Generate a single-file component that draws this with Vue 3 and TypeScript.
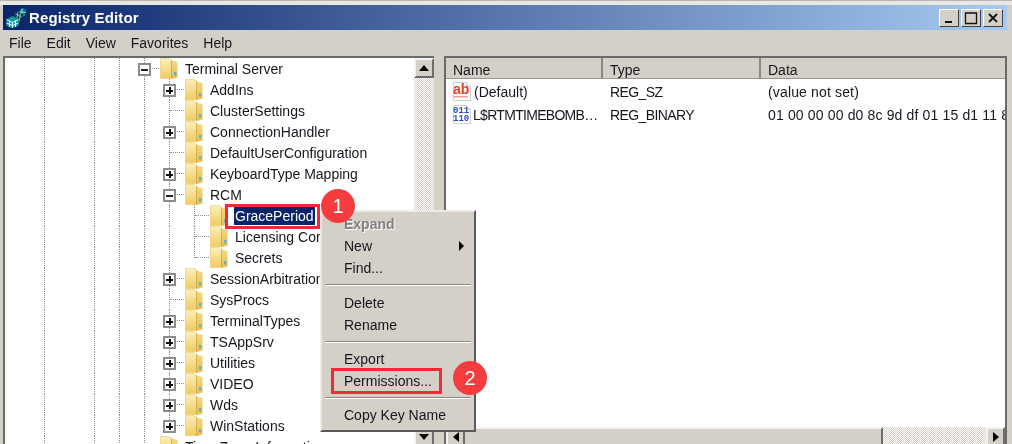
<script setup lang="ts">
type Kind = 'plus' | 'minus' | 'leaf'
interface Row {
  label: string
  level: number
  kind: Kind
  last?: boolean
  selected?: boolean
}

const base = [false, true, false, true, true]

const rows: Row[] = [
  { label: 'Terminal Server', level: 0, kind: 'minus' },
  { label: 'AddIns', level: 1, kind: 'plus' },
  { label: 'ClusterSettings', level: 1, kind: 'leaf' },
  { label: 'ConnectionHandler', level: 1, kind: 'plus' },
  { label: 'DefaultUserConfiguration', level: 1, kind: 'leaf' },
  { label: 'KeyboardType Mapping', level: 1, kind: 'plus' },
  { label: 'RCM', level: 1, kind: 'minus' },
  { label: 'GracePeriod', level: 2, kind: 'leaf', selected: true },
  { label: 'Licensing Core', level: 2, kind: 'leaf' },
  { label: 'Secrets', level: 2, kind: 'leaf', last: true },
  { label: 'SessionArbitrationHelper', level: 1, kind: 'plus' },
  { label: 'SysProcs', level: 1, kind: 'leaf' },
  { label: 'TerminalTypes', level: 1, kind: 'plus' },
  { label: 'TSAppSrv', level: 1, kind: 'plus' },
  { label: 'Utilities', level: 1, kind: 'plus' },
  { label: 'VIDEO', level: 1, kind: 'plus' },
  { label: 'Wds', level: 1, kind: 'plus' },
  { label: 'WinStations', level: 1, kind: 'plus', last: true },
  { label: 'Time Zone Information', level: 0, kind: 'leaf' },
]

function guides(level: number): boolean[] {
  return [...base, ...Array<boolean>(level).fill(true)]
}

const menus = ['File', 'Edit', 'View', 'Favorites', 'Help']

const values = [
  { name: '(Default)', type: 'REG_SZ', data: '(value not set)', icon: 'ab', caps: false },
  { name: 'L$RTMTIMEBOMB…', type: 'REG_BINARY', data: '01 00 00 00 d0 8c 9d df 01 15 d1 11 8c 7a 00 c0 4f c2 97 eb', icon: 'bin', caps: true },
]
</script>

<template>
  <div class="win">
    <svg class="defs" width="0" height="0" aria-hidden="true">
      <defs>
        <linearGradient id="fa" x1="0" y1="0" x2="0" y2="1">
          <stop offset="0" stop-color="#fbf0b8" />
          <stop offset="1" stop-color="#efcb62" />
        </linearGradient>
        <linearGradient id="fb" x1="0" y1="0" x2="0" y2="1">
          <stop offset="0" stop-color="#f3d981" />
          <stop offset="1" stop-color="#e8bd52" />
        </linearGradient>
        <symbol id="folder" viewBox="0 0 18 21">
          <path d="M0.5 0.5h8.5l3 2v18H0.5z" fill="url(#fa)" stroke="#e6c873" stroke-width=".6" />
          <path d="M11.5 2.5 17.5 4v15.5l-6 1.5z" fill="url(#fb)" />
          <path d="M11.5 2.5v18" stroke="#c9a54a" stroke-width=".8" />
          <rect x="14" y="14" width="2.4" height="3.4" fill="#62b3c4" />
        </symbol>
      </defs>
    </svg>

    <header class="title">
      <svg class="app-icon" width="20" height="20" viewBox="0 0 20 20">
        <path d="M13 3l3.500-3 3.500 2-1 6-3.500 1z" fill="#137e85" />
        <path d="M16 0.500 15.500 9M13.500 4l6 .5" stroke="#c9efe9" stroke-width=".8" fill="none" />
        <path d="M7 8l5-4.500 5 2.500-1 6.500-4 2.500z" fill="#0d3f4a" />
        <path d="M9.500 5.800l6 3M12 3.800l-1.500 9M14.500 4.800l-1.500 9" stroke="#7fd2cf" stroke-width=".9" fill="none" />
        <path d="M0.500 11.500l6-3.500 6 3.500v6.500l-6 2-6-2z" fill="#169aa0" />
        <path d="M0.500 11.500l6 3 6-3M6.500 14.500V20M3.500 13v6M9.500 13v6M0.500 15l6 2.500 6-2.500" stroke="#e2f8f4" stroke-width="1" fill="none" />
      </svg>
      <span class="title-text">Registry Editor</span>
      <div class="caption-btns">
        <button class="cap">
          <svg width="12" height="12" viewBox="0 0 12 12"><rect x="2" y="9" width="7" height="2" fill="#111" /></svg>
        </button>
        <button class="cap">
          <svg width="14" height="14" viewBox="0 0 14 14"><path d="M1.500 2h11v10.500h-11z" fill="none" stroke="#111" stroke-width="1.300" /></svg>
        </button>
        <button class="cap">
          <svg width="12" height="12" viewBox="0 0 12 12"><path d="M2 2l8 8M10 2l-8 8" stroke="#111" stroke-width="1.800" /></svg>
        </button>
      </div>
    </header>

    <nav class="menubar">
      <span v-for="m in menus" :key="m" class="menubar-item">{{ m }}</span>
    </nav>

    <main class="panes">
      <section class="tree-pane">
        <div class="tree">
          <div v-for="r in rows" :key="r.label" class="row">
            <span v-for="(g, i) in guides(r.level)" :key="i" class="cell" :class="{ guide: g }"></span>
            <span class="cell node" :class="{ 'node-last': r.last }">
              <span v-if="r.kind !== 'leaf'" class="box" :class="r.kind"></span>
            </span>
            <svg class="folder" width="18" height="21"><use href="#folder" /></svg>
            <span class="label" :class="{ selected: r.selected }">{{ r.label }}</span>
          </div>
        </div>
        <div class="vscroll">
          <span class="sbtn"><i class="tri up"></i></span>
          <span class="strack"></span>
          <span class="sbtn"><i class="tri down"></i></span>
        </div>
      </section>

      <section class="list-pane">
        <div class="list-head">
          <span class="col name">Name</span>
          <span class="col type">Type</span>
          <span class="col data">Data</span>
        </div>
        <div class="list-body">
          <div v-for="v in values" :key="v.name" class="list-row">
            <span class="vname">
              <svg class="val-icon" width="20" height="21" viewBox="0 0 20 21">
                <path d="M1.500 1.500h13l4 4v14h-17z" fill="#fff" stroke="#cfcfcf" />
                <path d="M14.500 1.500v4h4" fill="#eee" stroke="#cfcfcf" />
                <template v-if="v.icon === 'ab'">
                  <text x="1" y="13" class="ab">ab</text>
                  <rect x="2" y="15" width="14" height="1.500" fill="#e9a090" />
                </template>
                <template v-else>
                  <text x="1" y="9" class="bin">011</text>
                  <text x="1" y="17" class="bin">110</text>
                </template>
              </svg>
              <span class="vname-text" :class="{ caps: v.caps }">{{ v.name }}</span>
            </span>
            <span class="vtype">{{ v.type }}</span>
            <span class="vdata">{{ v.data }}</span>
          </div>
        </div>
        <div class="hscroll">
          <span class="sbtn wide"><i class="tri left"></i></span>
          <span class="hthumb"></span>
          <span class="htrack"></span>
          <span class="sbtn wide"><i class="tri right"></i></span>
        </div>
      </section>
    </main>

    <div class="ctx">
      <div class="ctx-item disabled">Expand</div>
      <div class="ctx-item">New<i class="tri right small"></i></div>
      <div class="ctx-item">Find...</div>
      <div class="sep first"></div>
      <div class="ctx-item">Delete</div>
      <div class="ctx-item">Rename</div>
      <div class="sep"></div>
      <div class="ctx-item">Export</div>
      <div class="ctx-item">Permissions...</div>
      <div class="sep"></div>
      <div class="ctx-item">Copy Key Name</div>
    </div>

    <span class="mark mark-a"></span>
    <span class="mark mark-b"></span>
    <span class="badge badge-a">1</span>
    <span class="badge badge-b">2</span>
  </div>
</template>

<style>
html, body { margin: 0; background: #fff; }
</style>

<style scoped>
.win {
  position: relative;
  width: 1012px;
  height: 444px;
  overflow: hidden;
  box-sizing: border-box;
  padding: 5px 5px 0 3px;
  background: #d4d0c8;
  border-top: 1px solid #b8b6b0;
  box-shadow: inset 0 4px 0 #e9e7e2;
  font-family: "Liberation Sans", Arial, sans-serif;
  font-size: 14px;
  color: #16161e;
  filter: blur(0.45px);
}
.defs { position: absolute; }

.title {
  height: 25px;
  margin-top: -1px;
  display: flex;
  align-items: center;
  padding: 0 4px 0 3px;
  background: linear-gradient(90deg, #0a246a, #a6caf0);
  color: #fff;
}
.app-icon { flex: none; }
.title-text { margin-left: 3px; font-weight: 700; font-size: 15px; letter-spacing: 0.15px; }
.caption-btns { margin-left: auto; display: flex; gap: 2px; }
.cap {
  width: 20px;
  height: 18px;
  padding: 0;
  display: flex;
  align-items: center;
  justify-content: center;
  background: #d4d0c8;
  border: 1px solid;
  border-color: #fff #404040 #404040 #fff;
}

.menubar {
  height: 26px;
  display: flex;
  align-items: center;
  margin-left: 6px;
  gap: 15px;
}

.panes { display: flex; height: 400px; gap: 10px; }
.tree-pane {
  width: 431px;
  flex: none;
  box-sizing: border-box;
  display: flex;
  background: #fff;
  border-left: 2px solid #6a6a6a;
  border-top: 2px solid #6a6a6a;
}
.tree {
  flex: 1;
  min-width: 0;
  overflow: hidden;
  padding-left: 2px;
}
.row {
  height: 21px;
  display: flex;
  align-items: center;
  white-space: nowrap;
}
.cell {
  position: relative;
  width: 25px;
  height: 21px;
  flex: none;
}
.guide::before,
.node::before {
  content: "";
  position: absolute;
  left: 12px;
  top: 0;
  bottom: 0;
  border-left: 1px dotted #8f8f8f;
}
.node-last::before { bottom: 10px; }
.node::after {
  content: "";
  position: absolute;
  left: 13px;
  right: -2px;
  top: 10px;
  border-top: 1px dotted #8f8f8f;
}
.box {
  position: absolute;
  z-index: 1;
  left: 6px;
  top: 5px;
  width: 9px;
  height: 9px;
  border: 2px solid #8c8c8c;
  background: #fff;
}
.box.minus { background: linear-gradient(#222, #222) center / 7px 2px no-repeat, #fff; }
.box.plus {
  background:
    linear-gradient(#111, #111) center / 7px 2px no-repeat,
    linear-gradient(#111, #111) center / 2px 7px no-repeat,
    #fff;
}
.folder { flex: none; margin-left: 3px; }
.label { margin-left: 6px; padding: 1px; }
.label.selected {
  background: #0a246a;
  color: #fff;
}

.vscroll {
  width: 20px;
  flex: none;
  display: flex;
  flex-direction: column;
}
.sbtn {
  flex: none;
  display: flex;
  align-items: center;
  justify-content: center;
  height: 20px;
  box-sizing: border-box;
  background: #d4d0c8;
  border: 2px solid;
  border-color: #f4f3ef #6c6c6c #6c6c6c #f4f3ef;
}
.strack,
.htrack {
  background: repeating-conic-gradient(#d4d0c8 0 25%, #fff 0 50%) 0 0 / 2px 2px;
}
.strack { height: 349px; flex: none; }
.tri { display: block; width: 0; height: 0; border: 5px solid transparent; }
.tri.up { border-top: 0; border-bottom: 6px solid #000; }
.tri.down { border-bottom: 0; border-top: 6px solid #000; }
.tri.left { border-left: 0; border-right: 6px solid #000; }
.tri.right { border-right: 0; border-left: 6px solid #000; }

.list-pane {
  flex: 1;
  min-width: 0;
  box-sizing: border-box;
  display: flex;
  flex-direction: column;
  background: #fff;
  border-left: 2px solid #6a6a6a;
  border-top: 2px solid #6a6a6a;
  border-right: 2px solid #6a6a6a;
  overflow: hidden;
}
.list-head {
  height: 21px;
  flex: none;
  display: flex;
  align-items: center;
  background: #d4d0c8;
  border-bottom: 1px solid #9a978f;
  box-sizing: border-box;
}
.col {
  height: 100%;
  display: flex;
  align-items: center;
  box-sizing: border-box;
  padding: 3px 0 0 7px;
  flex: none;
  border-right: 2px solid #8a8880;
}
.col.name { width: 157px; }
.col.type { width: 158px; }
.col.data { flex: 1; border-right: 0; }
.list-body { height: 348px; flex: none; padding-top: 1px; box-sizing: border-box; overflow: hidden; }
.list-row {
  height: 23px;
  display: flex;
  align-items: center;
  white-space: nowrap;
}
.vname {
  width: 157px;
  flex: none;
  display: flex;
  align-items: center;
  padding-left: 6px;
  box-sizing: border-box;
}
.val-icon { flex: none; }
.vname-text { margin-left: 2px; }
.vname-text.caps { margin-left: 1px; letter-spacing: -0.7px; }
.vtype { width: 158px; flex: none; padding-left: 7px; box-sizing: border-box; letter-spacing: -0.6px; }
.vdata { flex: 1; min-width: 0; overflow: hidden; padding-left: 7px; letter-spacing: 0.15px; }
.ab { font: 700 14px "Liberation Sans", Arial, sans-serif; fill: #e04226; }
.bin { font: 700 9px "Liberation Mono", monospace; fill: #1f50c4; }

.hscroll { display: flex; height: 20px; flex: none; }
.sbtn.wide { width: 19px; height: 20px; }
.hthumb {
  width: 418px;
  flex: none;
  background: #d4d0c8;
  border-top: 2px solid #f4f3ef;
  border-right: 2px solid #6c6c6c;
  box-sizing: border-box;
}
.htrack { flex: 1; }

.ctx {
  position: absolute;
  left: 320px;
  top: 209px;
  width: 156px;
  height: 222px;
  box-sizing: border-box;
  padding: 1px 2px 5px;
  background: #d4d0c8;
  border: 2px solid;
  border-color: #ecebe6 #5a5a5a #5a5a5a #ecebe6;
}
.ctx-item {
  height: 22px;
  display: flex;
  align-items: center;
  justify-content: space-between;
  padding: 0 8px 0 20px;
}
.ctx-item.disabled {
  font-weight: 700;
  color: #808080;
  text-shadow: 1px 1px 0 #fff;
}
.tri.small { border-width: 5px 0 5px 5px; border-left-color: #000; }
.sep {
  height: 2px;
  margin: 5px 1px;
  background: linear-gradient(#8a8880 50%, #fff 50%);
}
.sep.first { margin-bottom: 6px; }

.mark {
  position: absolute;
  box-sizing: border-box;
  border: 3px solid #ee2b36;
}
.mark-a { left: 225px; top: 203px; width: 95px; height: 25px; }
.mark-b { left: 331px; top: 367px; width: 111px; height: 26px; }
.badge {
  position: absolute;
  width: 34px;
  height: 34px;
  border-radius: 50%;
  background: #f63c3f;
  color: #fff;
  display: flex;
  align-items: center;
  justify-content: center;
  font-size: 20px;
}
.badge-a { left: 321px; top: 188px; }
.badge-b { left: 453px; top: 360px; }
</style>
